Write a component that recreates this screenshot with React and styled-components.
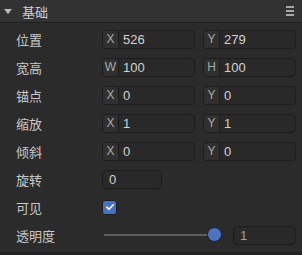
import React from "react";
import styled, { createGlobalStyle } from "styled-components";

const Global = createGlobalStyle`
  html, body { margin: 0; padding: 0; background: #2b2b2b; }
  body { font-family: "Liberation Sans", "Noto Sans CJK SC", sans-serif; }
`;

const Panel = styled.div`
  width: 302px;
  height: 255px;
  box-sizing: border-box;
  background: #2b2b2b;
  border-bottom: 3px solid #232323;
  display: flex;
  flex-direction: column;
`;

const Header = styled.div`
  height: 22px;
  display: flex;
  align-items: center;
  padding: 0 8px 0 4px;
  background: #323232;
  border-bottom: 1px solid #1f1f1f;
  color: #cfcfcf;
  font-size: 13px;
  font-family: "Noto Sans CJK SC", sans-serif;
`;

const Caret = styled.span`
  width: 0;
  height: 0;
  border-left: 4px solid transparent;
  border-right: 4px solid transparent;
  border-top: 5px solid #bdbdbd;
  margin-right: 10px;
`;

const Title = styled.span`
  flex: 1;
`;

const Menu = styled.div`
  width: 8px;
  display: flex;
  flex-direction: column;
  gap: 2px;
  & > i { display: block; height: 2px; background: #a8a8a8; }
`;

const Body = styled.div`
  padding: 2px 6px 0 16px;
  display: flex;
  flex-direction: column;
`;

const Row = styled.div`
  height: 28px;
  display: flex;
  align-items: center;
`;

const Label = styled.div`
  width: 86px;
  flex: none;
  color: #c8c8c8;
  font-size: 13px;
  font-family: "Noto Sans CJK SC", sans-serif;
`;

const Pair = styled.div`
  flex: 1;
  display: grid;
  grid-template-columns: 1fr 1fr;
  gap: 8px;
`;

const Field = styled.div`
  height: 19px;
  box-sizing: border-box;
  width: ${(p) => (p.$w ? p.$w + "px" : "auto")};
  flex: none;
  display: flex;
  align-items: center;
  background: #292929;
  border: 1px solid #1c1c1c;
  border-radius: 4px;
  overflow: hidden;
`;

const Prefix = styled.span`
  width: 15px;
  height: 100%;
  flex: none;
  display: flex;
  align-items: center;
  justify-content: center;
  background: #303030;
  border-right: 1px solid #1c1c1c;
  color: #a9a9a9;
  font-size: 12px;
`;

const Value = styled.span`
  padding-left: ${(p) => (p.$pad ? p.$pad : 4)}px;
  color: ${(p) => (p.$dim ? "#a0a0a0" : "#d2d2d2")};
  font-size: 13px;
`;

const Check = styled.div`
  width: 15px;
  height: 15px;
  box-sizing: border-box;
  border-radius: 3px;
  background: #4a6fc0;
  border: 1px solid #1d1d1d;
  display: flex;
  align-items: center;
  justify-content: center;
`;

const SliderWrap = styled.div`
  flex: 1;
  display: flex;
  align-items: center;
  gap: 18px;
`;

const Track = styled.div`
  flex: 1;
  height: 2px;
  margin-left: 2px;
  background: #5e5e5e;
  position: relative;
`;

const Thumb = styled.div`
  position: absolute;
  right: -7px;
  top: -7px;
  width: 15px;
  height: 15px;
  box-sizing: border-box;
  border-radius: 50%;
  background: #4d72c2;
  border: 1px solid #1c1c1c;
`;

function Vec({ a, b, va, vb }) {
  return (
    <Pair>
      <Field>
        <Prefix>{a}</Prefix>
        <Value>{va}</Value>
      </Field>
      <Field>
        <Prefix>{b}</Prefix>
        <Value>{vb}</Value>
      </Field>
    </Pair>
  );
}

export default function App() {
  return (
    <>
      <Global />
      <Panel>
        <Header>
          <Caret />
          <Title>基础</Title>
          <Menu>
            <i />
            <i />
            <i />
          </Menu>
        </Header>
        <Body>
          <Row>
            <Label>位置</Label>
            <Vec a="X" b="Y" va="526" vb="279" />
          </Row>
          <Row>
            <Label>宽高</Label>
            <Vec a="W" b="H" va="100" vb="100" />
          </Row>
          <Row>
            <Label>锚点</Label>
            <Vec a="X" b="Y" va="0" vb="0" />
          </Row>
          <Row>
            <Label>缩放</Label>
            <Vec a="X" b="Y" va="1" vb="1" />
          </Row>
          <Row>
            <Label>倾斜</Label>
            <Vec a="X" b="Y" va="0" vb="0" />
          </Row>
          <Row>
            <Label>旋转</Label>
            <Field $w={60}>
              <Value $pad={6}>0</Value>
            </Field>
          </Row>
          <Row>
            <Label>可见</Label>
            <Check>
              <svg width="10" height="10" viewBox="0 0 10 10">
                <path d="M1.8 5.2 L4 7.3 L8.3 2.8" fill="none" stroke="#fff" strokeWidth="1.6" strokeLinecap="round" strokeLinejoin="round" />
              </svg>
            </Check>
          </Row>
          <Row>
            <Label>透明度</Label>
            <SliderWrap>
              <Track>
                <Thumb />
              </Track>
              <Field $w={63}>
                <Value $pad={6} $dim>1</Value>
              </Field>
            </SliderWrap>
          </Row>
        </Body>
      </Panel>
    </>
  );
}
